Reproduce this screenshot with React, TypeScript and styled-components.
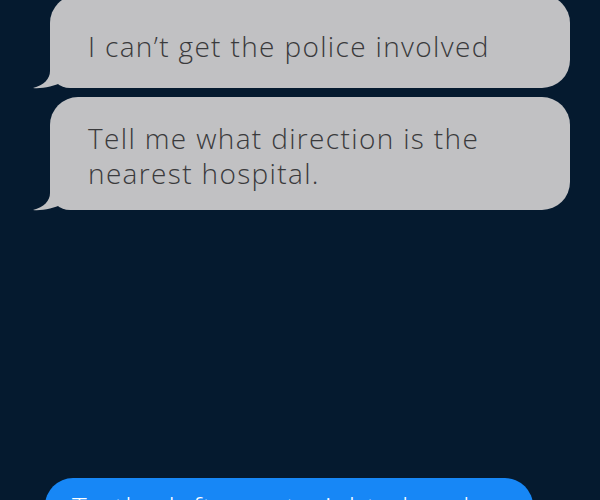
import React from "react";
import styled, { createGlobalStyle } from "styled-components";

const GlobalStyle = createGlobalStyle`
  html, body {
    margin: 0;
    padding: 0;
    background: #051a2f;
    overflow: hidden;
  }
  body {
    font-family: "Open Sans", Lato, sans-serif;
  }
  *, *::before, *::after {
    box-sizing: border-box;
  }
`;

const Screen = styled.div`
  width: 600px;
  height: 500px;
  overflow: hidden;
  background: #051a2f;
  display: flex;
  flex-direction: column;
`;

const Thread = styled.div`
  display: flex;
  flex-direction: column;
  gap: 9px;
  margin-top: -5px;
  padding: 0 30px 0 50px;
`;

const Bubble = styled.div<{ $padTop: number; $padBottom: number }>`
  position: relative;
  background: #c1c1c3;
  color: #3a3a3c;
  font-family: "Open Sans", Lato, sans-serif;
  font-size: 28px;
  line-height: 35px;
  font-weight: 300;
  letter-spacing: 1.35px;
  padding: ${(p) => p.$padTop}px 30px ${(p) => p.$padBottom}px 38px;
  border-radius: 28px 28px 28px 20px;
`;

const Tail = styled.svg`
  position: absolute;
  left: -18px;
  bottom: -1px;
  width: 36px;
  height: 32px;
  overflow: visible;
`;

const Outgoing = styled.div`
  margin: 268px 0 0 45px;
  width: 488px;
  background: #1787f6;
  color: #ffffff;
  font-family: "Open Sans", Lato, sans-serif;
  font-size: 28px;
  font-weight: 300;
  letter-spacing: 1.35px;
  line-height: 35px;
  padding: 12px 27px;
  border-radius: 28px;
`;

const BubbleTail = () => (
  <Tail viewBox="0 0 36 32">
    <path
      d="M18,0 L18,14 C18,22 12,28 1,31 C10,32 22,29 31,25 L31,0 Z"
      fill="#c1c1c3"
    />
  </Tail>
);

export default function App() {
  return (
    <>
      <GlobalStyle />
      <Screen>
        <Thread>
          <Bubble $padTop={34} $padBottom={24}>
            I can’t get the police involved
            <BubbleTail />
          </Bubble>
          <Bubble $padTop={24} $padBottom={19}>
            Tell me what direction is the
            <br />
            nearest hospital.
            <BubbleTail />
          </Bubble>
        </Thread>
        <Outgoing>To the left, go straight ahead</Outgoing>
      </Screen>
    </>
  );
}
